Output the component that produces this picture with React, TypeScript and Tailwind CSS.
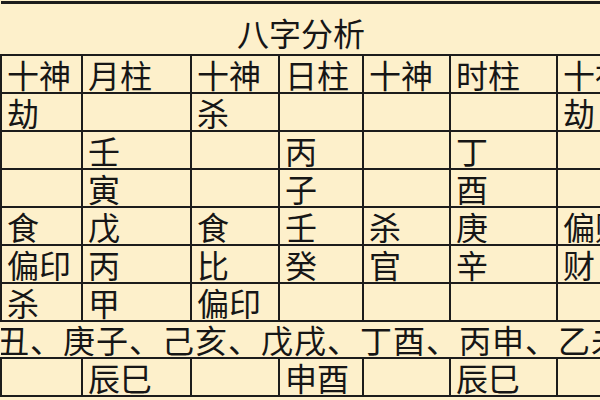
const colWidths = [81, 109, 88, 84, 87, 107, 90]

const header = ["十神", "月柱", "十神", "日柱", "十神", "时柱", "十神"]

const rows: string[][] = [
  ["劫", "", "杀", "", "", "", "劫"],
  ["", "壬", "", "丙", "", "丁", ""],
  ["", "寅", "", "子", "", "酉", ""],
  ["食", "戊", "食", "壬", "杀", "庚", "偏财"],
  ["偏印", "丙", "比", "癸", "官", "辛", "财"],
  ["杀", "甲", "偏印", "", "", "", ""],
]

const lastRow = ["", "辰巳", "", "申酉", "", "辰巳", ""]

const dayun = "辛丑、庚子、己亥、戊戌、丁酉、丙申、乙未、甲午"

const cell =
  "border-2 border-[#1c1c1c] p-0 pl-[5px] text-left align-middle whitespace-nowrap overflow-hidden"

function Row({ items }: { items: string[] }) {
  return (
    <tr className="h-[38px]">
      {items.map((v, i) => (
        <td key={i} className={cell}>
          {v}
        </td>
      ))}
    </tr>
  )
}

export default function App() {
  return (
    <div
      className="w-[600px] h-[400px] overflow-hidden bg-[#fdf0cb] text-[#161616] pt-[1px]"
      style={{ fontFamily: '"Noto Sans CJK SC", "Noto Sans", sans-serif' }}
    >
      <table className="table-fixed border-collapse w-[646px] text-[32px] leading-[34px]">
        <colgroup>
          {colWidths.map((w, i) => (
            <col key={i} style={{ width: w }} />
          ))}
        </colgroup>
        <tbody>
          {/* title */}
          <tr className="h-[52px]">
            <td
              colSpan={7}
              className="border-t-[3px] border-b-2 border-x-0 border-[#1c1c1c] p-0 align-middle"
            >
              <div className="w-[600px] text-center pt-[6px]">八字分析</div>
            </td>
          </tr>
          <Row items={header} />
          {rows.map((r, i) => (
            <Row key={i} items={r} />
          ))}
          {/* 大运 */}
          <tr className="h-[37px]">
            <td
              colSpan={7}
              className="border-y-2 border-x-0 border-[#1c1c1c] p-0 align-middle whitespace-nowrap overflow-hidden"
            >
              <div className="-ml-[37px] tracking-[1px]">{dayun}</div>
            </td>
          </tr>
          <Row items={lastRow} />
        </tbody>
      </table>
    </div>
  )
}
